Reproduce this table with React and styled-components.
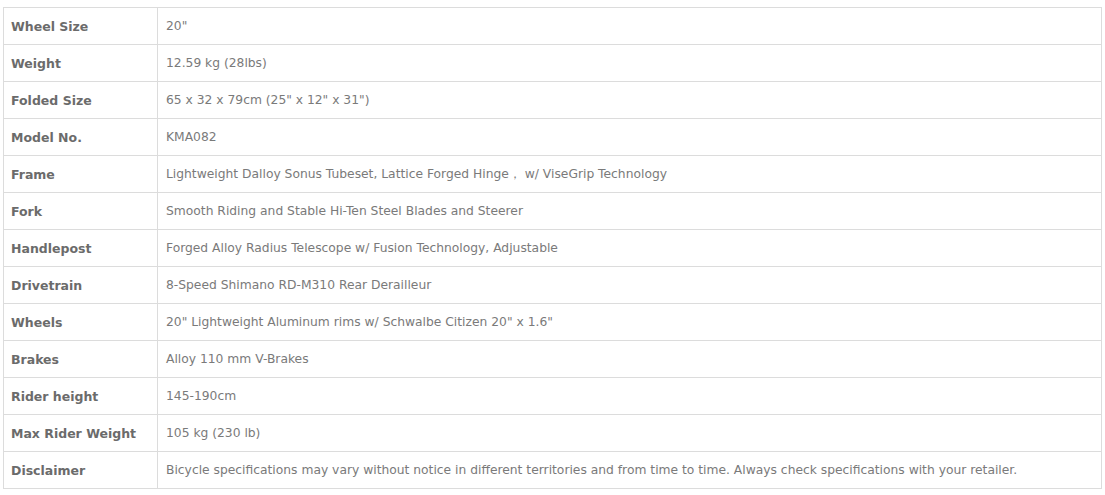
import React from 'react';
import styled, { createGlobalStyle } from 'styled-components';

const specs = [
  ['Wheel Size', '20"'],
  ['Weight', '12.59 kg (28lbs)'],
  ['Folded Size', '65 x 32 x 79cm (25" x 12" x 31")'],
  ['Model No.', 'KMA082'],
  ['Frame', 'Lightweight Dalloy Sonus Tubeset, Lattice Forged Hinge\uFF0C w/ ViseGrip Technology'],
  ['Fork', 'Smooth Riding and Stable Hi-Ten Steel Blades and Steerer'],
  ['Handlepost', 'Forged Alloy Radius Telescope w/ Fusion Technology, Adjustable'],
  ['Drivetrain', '8-Speed Shimano RD-M310 Rear Derailleur'],
  ['Wheels', '20" Lightweight Aluminum rims w/ Schwalbe Citizen 20" x 1.6"'],
  ['Brakes', 'Alloy 110 mm V-Brakes'],
  ['Rider height', '145-190cm'],
  ['Max Rider Weight', '105 kg (230 lb)'],
  ['Disclaimer', 'Bicycle specifications may vary without notice in different territories and from time to time. Always check specifications with your retailer.'],
];

const GlobalStyle = createGlobalStyle`
  body {
    margin: 0;
    background: #fff;
    font-family: "DejaVu Sans", Verdana, sans-serif;
  }
`;

const Wrapper = styled.div`
  padding: 7px 0 0 3px;
`;

const SpecTable = styled.table`
  width: 1099px;
  border-collapse: collapse;
  table-layout: fixed;
`;

const Row = styled.tr`
  height: 37px;
`;

const Cell = styled.td`
  border: 1px solid #dcdcdc;
  padding: 0 0 0 ${props => (props.label ? '7px' : '8px')};
  width: ${props => (props.label ? '146px' : 'auto')};
  font-size: ${props => (props.label ? '12.5px' : '12.3px')};
  font-weight: ${props => (props.label ? 'bold' : 'normal')};
  color: ${props => (props.label ? '#6b6b6b' : '#7a7a7a')};
  white-space: nowrap;
  vertical-align: middle;
`;

export default function App() {
  return (
    <Wrapper>
      <GlobalStyle />
      <SpecTable>
        <tbody>
          {specs.map(([name, value]) => (
            <Row key={name}>
              <Cell label>{name}</Cell>
              <Cell>{value}</Cell>
            </Row>
          ))}
        </tbody>
      </SpecTable>
    </Wrapper>
  );
}
